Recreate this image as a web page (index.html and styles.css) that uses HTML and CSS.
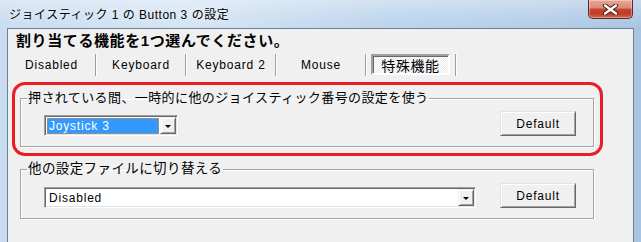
FILE: index.html
```html
<!DOCTYPE html>
<html lang="ja">
<head>
  <meta charset="UTF-8">
  <title>ジョイスティック 1 の Button 3 の設定</title>
  <link rel="stylesheet" href="styles.css">
</head>
<body>
  <div class="window">
    <div class="titlebar">
      <span class="title">ジョイスティック 1 の Button 3 の設定</span>
      <div class="close-btn">
        <svg width="17" height="11" viewBox="0 0 17 11">
          <path d="M3 1.5 L14 9.5 M14 1.5 L3 9.5" stroke="#4a1c16" stroke-width="4.4" stroke-linecap="round"/>
          <path d="M3 1.5 L14 9.5 M14 1.5 L3 9.5" stroke="#fff" stroke-width="2.4" stroke-linecap="round"/>
        </svg>
      </div>
    </div>

    <div class="frame">
      <div class="client">
        <h1 class="prompt">割り当てる機能を1つ選んでください。</h1>

        <div class="toolbar">
          <span class="tool first">Disabled</span>
          <span class="sep"></span>
          <span class="tool">Keyboard</span>
          <span class="sep"></span>
          <span class="tool">Keyboard 2</span>
          <span class="sep"></span>
          <span class="tool">Mouse</span>
          <span class="sep"></span>
          <span class="tool"><span class="pressed">特殊機能</span></span>
          <span class="sep"></span>
        </div>

        <div class="highlight">
          <fieldset class="group">
            <legend>押されている間、一時的に他のジョイスティック番号の設定を使う</legend>
            <div class="group-row">
              <div class="combo combo-short">
                <span class="combo-value selected"><span class="focus">Joystick 3</span></span>
                <span class="combo-arrow"></span>
              </div>
              <button class="win-btn">Default</button>
            </div>
          </fieldset>
        </div>

        <fieldset class="group group-wide">
          <legend>他の設定ファイルに切り替える</legend>
          <div class="group-row">
            <div class="combo combo-long">
              <span class="combo-value">Disabled</span>
              <span class="combo-arrow"></span>
            </div>
            <button class="win-btn">Default</button>
          </div>
        </fieldset>
      </div>
    </div>
  </div>
</body>
</html>
```

FILE: styles.css
```css
body {
  margin: 0;
  padding: 0;
  font-family: "Liberation Sans", "Noto Sans CJK JP", sans-serif;
  color: #000;
  background-color: #f0f0f0;
}

.window {
  width: 641px;
  height: 242px;
  overflow: hidden;
  display: flex;
  flex-direction: column;
  background: linear-gradient(90deg, #c9dcf0 0%, #d4e4f4 30%, #bcd4ec 60%, #b3cde8 85%, #a9c4e2 100%);
}

.titlebar {
  height: 28px;
  display: flex;
  align-items: flex-start;
  padding-left: 9px;
  background: linear-gradient(180deg, rgba(255,255,255,0.35) 0%, rgba(255,255,255,0.1) 60%, rgba(255,255,255,0) 100%);
}

.title {
  font-size: 12px;
  line-height: 15px;
  margin-top: 8px;
  letter-spacing: 0.5px;
  text-shadow: 0 0 6px rgba(255,255,255,0.9);
}

.close-btn {
  margin-left: auto;
  margin-right: 8px;
  width: 43px;
  height: 18px;
  display: flex;
  align-items: center;
  justify-content: center;
  border: 1px solid #5a2b24;
  border-top: none;
  border-radius: 0 0 5px 5px;
  background: linear-gradient(180deg, #e9a797 0%, #d98a78 45%, #c8442f 50%, #c23b28 75%, #d2664e 100%);
  box-shadow: inset 0 0 0 1px rgba(255,255,255,0.35);
}

.frame {
  flex: 1;
  display: flex;
  padding: 0 7px;
}

.client {
  flex: 1;
  border: 1px solid #6e8196;
  border-bottom: none;
  background-color: #f0f0f0;
  padding-top: 2px;
}

.prompt {
  margin: 0;
  padding-left: 8px;
  font-size: 15px;
  line-height: 20px;
  font-weight: bold;
  letter-spacing: 0.6px;
}

.toolbar {
  display: flex;
  margin-top: 3px;
  height: 22px;
}

.tool {
  width: 88px;
  display: flex;
  align-items: center;
  justify-content: center;
  font-size: 12px;
  letter-spacing: 0.8px;
}

.tool.first {
  width: 87px;
}

.sep {
  width: 1px;
  border-left: 1px solid #a0a0a0;
  background-color: #fff;
}

.pressed {
  width: 75px;
  height: 17px;
  margin: 0 5px 1px 4px;
  display: flex;
  align-items: center;
  justify-content: center;
  font-size: 14px;
  letter-spacing: 0.6px;
  border: 2px solid;
  border-color: #a0a0a0 #fff #fff #a0a0a0;
  box-shadow: inset 1px 1px 0 #696969;
  background: repeating-conic-gradient(#fff 0 25%, #ececec 0 50%) 0 0 / 2px 2px;
}

.highlight {
  margin: 6px 0 0 4px;
  width: 591px;
  box-sizing: border-box;
  border: 3px solid #ec1c24;
  border-radius: 13px;
  padding: 6px 6px 6px 5px;
}

fieldset.group {
  margin: 0;
  padding: 0;
  min-inline-size: 0;
  border: 1px solid #a5a5a5;
  box-shadow: 1px 1px 0 #fff, inset 1px 1px 0 #fff;
}

.group legend {
  margin-left: 6px;
  padding: 0 1px;
  font-size: 13px;
  line-height: 14px;
  letter-spacing: 0.4px;
}

.group-wide {
  margin: 6px 0 0 12px !important;
  width: 574px;
  box-sizing: border-box;
}

.group-wide legend {
  font-size: 13.5px;
}

.group-row {
  display: flex;
  align-items: flex-start;
  padding: 0 17px 10px 23px;
}

.combo {
  margin-top: 10px;
  height: 21px;
  box-sizing: border-box;
  display: flex;
  border: 1px solid;
  border-color: #a0a0a0 #fff #fff #a0a0a0;
  box-shadow: inset 1px 1px 0 #696969, inset -1px -1px 0 #e3e3e3;
  background-color: #fff;
  padding: 1px;
}

.group-wide .combo {
  margin-top: 11px;
}

.combo-short {
  width: 134px;
}

.combo-long {
  width: 432px;
}

.combo-value {
  flex: 1;
  display: flex;
  align-items: center;
  padding-left: 3px;
  font-size: 12px;
  letter-spacing: 0.8px;
}

.combo-value.selected {
  padding: 1px 1px 0 1px;
  background-color: #fff;
}

.focus {
  flex: 1;
  align-self: stretch;
  display: flex;
  align-items: center;
  padding-left: 2px;
  color: #fff;
  background-color: #3399ff;
  outline: 1px dotted #e08a1c;
  outline-offset: -1px;
}

.combo-arrow {
  width: 16px;
  box-sizing: border-box;
  border: 1px solid;
  border-color: #f0f0f0 #696969 #696969 #f0f0f0;
  box-shadow: inset 1px 1px 0 #fff, inset -1px -1px 0 #a0a0a0;
  background-color: #f0f0f0;
  display: flex;
  align-items: center;
  justify-content: center;
}

.combo-arrow::after {
  content: "";
  border-left: 3px solid transparent;
  border-right: 3px solid transparent;
  border-top: 3px solid #000;
  margin-top: 2px;
}

.win-btn {
  margin: 6px 0 0 auto;
  width: 76px;
  height: 25px;
  padding: 0;
  font-family: inherit;
  font-size: 12px;
  letter-spacing: 0.8px;
  color: #000;
  background-color: #f0f0f0;
  border: 1px solid;
  border-color: #e3e3e3 #696969 #696969 #e3e3e3;
  box-shadow: inset 1px 1px 0 #fff, inset -1px -1px 0 #a0a0a0;
}

.group-wide .win-btn {
  margin-top: 7px;
}
```
